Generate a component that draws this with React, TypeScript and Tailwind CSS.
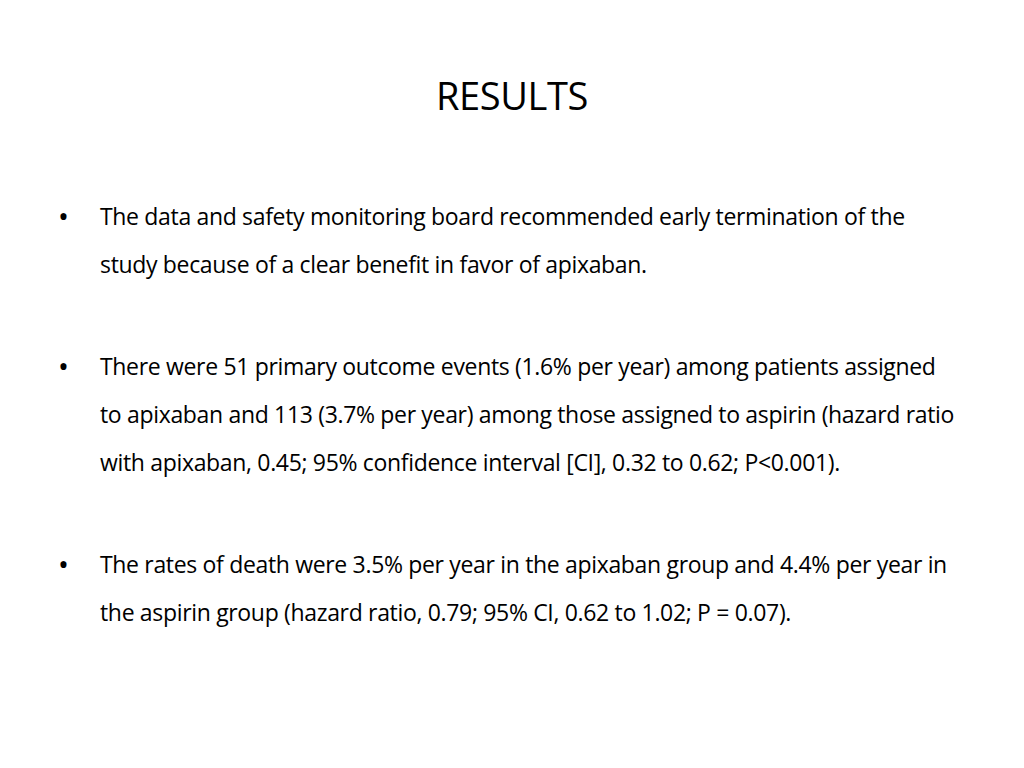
import React from "react";

const paras: string[][] = [
  [
    "The data and safety monitoring board recommended early termination of the",
    "study because of a clear benefit in favor of apixaban.",
  ],
  [
    "There were 51 primary outcome events (1.6% per year) among patients assigned",
    "to apixaban and 113 (3.7% per year) among those assigned to aspirin (hazard ratio",
    "with apixaban, 0.45; 95% confidence interval [CI], 0.32 to 0.62; P<0.001).",
  ],
  [
    "The rates of death were 3.5% per year in the apixaban group and 4.4% per year in",
    "the aspirin group (hazard ratio, 0.79; 95% CI, 0.62 to 1.02; P = 0.07).",
  ],
];

export default function App() {
  return (
    <div
      className="w-[1024px] h-[768px] bg-white text-black overflow-hidden"
      style={{ fontFamily: '"Open Sans", "Liberation Sans", sans-serif' }}
    >
      <h1 className="text-center text-[38px] leading-[48px] pt-[71px] font-normal tracking-[-0.4px]">
        RESULTS
      </h1>
      <div className="pt-[73px] pl-[58px]">
        {paras.map((lines, i) => (
          <div key={i} className={`flex ${i > 0 ? "mt-[54px]" : ""}`}>
            <div className="w-[42px] text-[29px] leading-[48px]">•</div>
            <div className="text-[23px] leading-[48px] whitespace-nowrap tracking-[-0.33px]">
              {lines.map((l, j) => (
                <div key={j}>{l}</div>
              ))}
            </div>
          </div>
        ))}
      </div>
    </div>
  );
}
